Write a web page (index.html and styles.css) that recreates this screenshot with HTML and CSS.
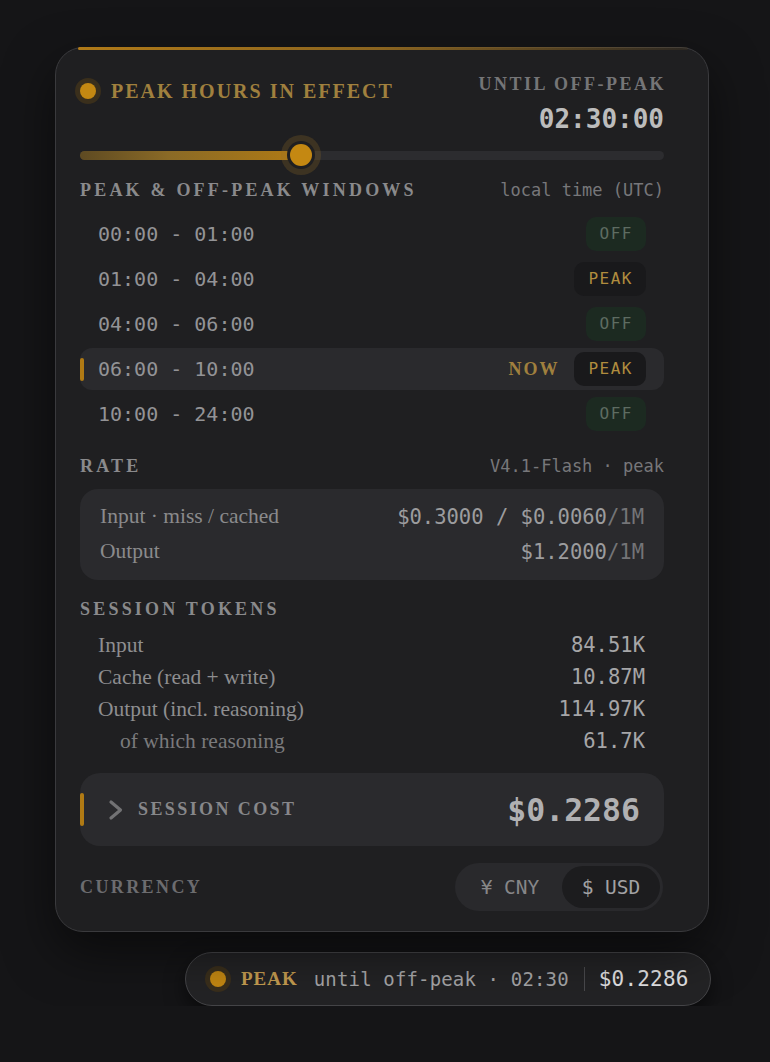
FILE: index.html
```html
<!DOCTYPE html>
<html lang="en">

<head>
  <meta charset="UTF-8">
  <meta name="viewport" content="width=device-width, initial-scale=1.0">
  <title>Peak hours</title>
  <link rel="stylesheet" href="styles.css">
</head>

<body>
  <div class="page">
    <section class="card">
      <!-- status header -->
      <header class="head">
        <div class="head-left">
          <span class="dot"></span>
          <h1 class="title">PEAK HOURS IN EFFECT</h1>
        </div>
        <div class="head-right">
          <div class="until">UNTIL OFF-PEAK</div>
          <div class="timer">02:30:00</div>
        </div>
      </header>

      <div class="track">
        <div class="fill" style="width: 37.8%">
          <span class="knob"></span>
        </div>
      </div>

      <div class="section-head windows-head">
        <h2>PEAK &amp; OFF-PEAK WINDOWS</h2>
        <span class="meta">local time (UTC)</span>
      </div>

      <ul class="windows">
        <li class="win">
          <span class="time">00:00 - 01:00</span>
          <span class="badge off">OFF</span>
        </li>
        <li class="win">
          <span class="time">01:00 - 04:00</span>
          <span class="badge peak">PEAK</span>
        </li>
        <li class="win">
          <span class="time">04:00 - 06:00</span>
          <span class="badge off">OFF</span>
        </li>
        <li class="win current">
          <span class="time">06:00 - 10:00</span>
          <span class="now">NOW</span>
          <span class="badge peak">PEAK</span>
        </li>
        <li class="win">
          <span class="time">10:00 - 24:00</span>
          <span class="badge off">OFF</span>
        </li>
      </ul>

      <div class="section-head rate-head">
        <h2>RATE</h2>
        <span class="meta">V4.1-Flash · peak</span>
      </div>

      <div class="rate-box">
        <div class="rate-row">
          <span class="label">Input · miss / cached</span>
          <span class="value">$0.3000 / $0.0060<span class="unit">/1M</span></span>
        </div>
        <div class="rate-row">
          <span class="label">Output</span>
          <span class="value">$1.2000<span class="unit">/1M</span></span>
        </div>
      </div>

      <div class="section-head tokens-head">
        <h2>SESSION TOKENS</h2>
      </div>

      <div class="tokens">
        <div class="tok-row">
          <span class="label">Input</span>
          <span class="value">84.51K</span>
        </div>
        <div class="tok-row">
          <span class="label">Cache (read + write)</span>
          <span class="value">10.87M</span>
        </div>
        <div class="tok-row">
          <span class="label">Output (incl. reasoning)</span>
          <span class="value">114.97K</span>
        </div>
        <div class="tok-row sub">
          <span class="label">of which reasoning</span>
          <span class="value">61.7K</span>
        </div>
      </div>

      <div class="cost-box">
        <span class="cost-bar"></span>
        <svg class="chev" width="16" height="22" viewBox="0 0 16 22">
          <path d="M3 3 L12.5 11 L3 19" fill="none" stroke="#727274" stroke-width="3.2" stroke-linecap="round" stroke-linejoin="round" />
        </svg>
        <span class="cost-label">SESSION COST</span>
        <span class="cost-value">$0.2286</span>
      </div>

      <div class="currency">
        <span class="cur-label">CURRENCY</span>
        <div class="toggle">
          <span class="opt">¥ CNY</span>
          <span class="opt active">$ USD</span>
        </div>
      </div>
    </section>

    <!-- compact status pill -->
    <div class="pill">
      <span class="dot small"></span>
      <span class="pill-peak">PEAK</span>
      <span class="pill-text">until off-peak · 02:30</span>
      <span class="pill-sep"></span>
      <span class="pill-cost">$0.2286</span>
    </div>
  </div>
</body>

</html>
```

FILE: styles.css
```css
body {
  margin: 0;
  background: #151517;
  font-family: "Liberation Serif", serif;
  color: #8a8a8a;
}

.page {
  padding: 47px 0 0 55px;
}

.card {
  position: relative;
  width: 654px;
  box-sizing: border-box;
  padding: 25px 44px 20px 24px;
  background: #1f1f21;
  border: 1px solid #3a3a3d;
  border-radius: 28px;
  box-shadow: 0 20px 50px rgba(0, 0, 0, 0.5);
}

/* gold edge along the top */
.card::before {
  content: "";
  position: absolute;
  top: -1px;
  left: 22px;
  right: 20px;
  height: 3px;
  border-radius: 2px;
  background: linear-gradient(to right, #b07a18, #8a6420 50%, rgba(120, 90, 40, 0.15));
}

h1,
h2 {
  margin: 0;
  font-weight: bold;
}

/* header */
.head {
  display: flex;
  justify-content: space-between;
  align-items: flex-start;
}

.head-left {
  display: flex;
  align-items: center;
  gap: 15px;
  margin-top: 5px;
}

.dot {
  width: 16px;
  height: 16px;
  border-radius: 50%;
  background: #c48812;
  box-shadow: 0 0 0 5px #3a2f1c;
}

.title {
  font-size: 20px;
  line-height: 26px;
  letter-spacing: 2px;
  color: #a0803e;
}

.head-right {
  text-align: right;
}

.until {
  font-size: 18px;
  line-height: 22px;
  letter-spacing: 2.5px;
  font-weight: bold;
  color: #757577;
  margin-right: -2px;
}

.timer {
  margin-top: 9px;
  font-family: "DejaVu Sans Mono", monospace;
  font-weight: bold;
  font-size: 26px;
  line-height: 30px;
  color: #bcbcbc;
}

/* progress */
.track {
  margin-top: 17px;
  height: 9px;
  border-radius: 5px;
  background: #2c2c2f;
}

.fill {
  position: relative;
  height: 100%;
  border-radius: 5px;
  background: linear-gradient(to right, #5e4a22, #8a6a26 40%, #b07a14);
}

.knob {
  position: absolute;
  right: -11px;
  top: -7px;
  width: 22px;
  height: 22px;
  border-radius: 50%;
  background: #c48812;
  box-shadow: 0 0 0 3px #1f1f21, 0 0 0 9px rgba(150, 110, 40, 0.25);
}

/* section headings */
.section-head {
  display: flex;
  justify-content: space-between;
  align-items: center;
  height: 22px;
}

.section-head h2 {
  font-size: 18px;
  letter-spacing: 3.2px;
  color: #8a8a8c;
}

.meta {
  font-family: "DejaVu Sans Mono", monospace;
  font-size: 17px;
  color: #77777a;
}

.windows-head {
  margin-top: 19px;
}

/* time windows */
.windows {
  list-style: none;
  margin: 12px 0 0;
  padding: 0;
  display: flex;
  flex-direction: column;
  gap: 3px;
}

.win {
  position: relative;
  display: flex;
  align-items: center;
  height: 42px;
  padding: 0 18px;
  border-radius: 12px;
}

.win .time {
  flex: 1;
  font-family: "DejaVu Sans Mono", monospace;
  font-size: 20px;
  color: #939396;
}

.win.current {
  background: #2a2a2d;
}

.win.current::before {
  content: "";
  position: absolute;
  left: 0;
  top: 10px;
  width: 4px;
  height: 23px;
  border-radius: 2px;
  background: #b07a14;
}

.now {
  margin-right: 15px;
  font-size: 18px;
  font-weight: bold;
  letter-spacing: 2px;
  color: #a0803e;
}

.badge {
  height: 34px;
  line-height: 34px;
  padding: 0 13px 0 14px;
  border-radius: 10px;
  font-family: "DejaVu Sans Mono", monospace;
  font-size: 16px;
  letter-spacing: 1.5px;
}

.badge.off {
  background: #1c2a21;
  color: #5e6c62;
}

.badge.peak {
  background: #19191b;
  color: #b08c3e;
}

/* rate */
.rate-head {
  margin-top: 20px;
}

.rate-box {
  margin-top: 12px;
  padding: 10px 20px 11px;
  border-radius: 18px;
  background: #2a2a2d;
}

.rate-row,
.tok-row {
  display: flex;
  justify-content: space-between;
  align-items: center;
}

.rate-row {
  height: 35px;
}

.label {
  font-size: 21.5px;
  color: #8a8a8c;
}

.value {
  font-family: "DejaVu Sans Mono", monospace;
  font-size: 20.5px;
  color: #9c9c9e;
}

.unit {
  color: #747477;
}

/* tokens */
.tokens-head {
  margin-top: 18px;
}

.tokens {
  margin-top: 9px;
  padding: 0 19px 0 18px;
}

.tok-row {
  height: 32px;
}

.tok-row .label {
  color: #8e8e90;
}

.tok-row .value {
  color: #a6a6a8;
}

.tok-row.sub .label {
  padding-left: 22px;
  color: #7a7a7c;
}

/* session cost */
.cost-box {
  position: relative;
  display: flex;
  align-items: center;
  height: 73px;
  margin-top: 16px;
  padding: 0 24px 0 28px;
  border-radius: 20px;
  background: #2a2a2d;
}

.cost-bar {
  position: absolute;
  left: 0;
  top: 20px;
  width: 4px;
  height: 33px;
  border-radius: 2px;
  background: #b07a14;
}

.chev {
  margin-right: 14px;
}

.cost-label {
  flex: 1;
  font-size: 18px;
  font-weight: bold;
  letter-spacing: 2.4px;
  color: #87878a;
}

.cost-value {
  font-family: "DejaVu Sans Mono", monospace;
  font-weight: bold;
  font-size: 31.5px;
  color: #b0b0b2;
}

/* currency */
.currency {
  display: flex;
  justify-content: space-between;
  align-items: center;
  margin-top: 17px;
}

.cur-label {
  font-size: 18px;
  font-weight: bold;
  letter-spacing: 2.4px;
  color: #6c6c6f;
}

.toggle {
  display: flex;
  width: 208px;
  height: 48px;
  box-sizing: border-box;
  padding: 3px;
  border-radius: 24px;
  background: #29292c;
  margin-right: 1px;
}

.opt {
  flex: 1;
  display: flex;
  align-items: center;
  justify-content: center;
  border-radius: 21px;
  font-family: "DejaVu Sans Mono", monospace;
  font-size: 19.5px;
  color: #868688;
}

.opt.active {
  flex: 0 0 98px;
  background: #1c1c1e;
  color: #a2a2a4;
}

/* pill */
.pill {
  display: flex;
  align-items: center;
  width: 526px;
  height: 54px;
  box-sizing: border-box;
  margin: 20px 0 0 130px;
  padding: 0 25px 0 19px;
  border: 1px solid #454548;
  border-radius: 27px;
  background: #232325;
  box-shadow: 0 8px 20px rgba(0, 0, 0, 0.5);
  white-space: nowrap;
}

.dot.small {
  margin: 0 0 0 5px;
  flex: none;
}

.pill-peak {
  margin-left: 15px;
  font-size: 19px;
  font-weight: bold;
  letter-spacing: 1px;
  color: #c49c50;
}

.pill-text {
  margin-left: 16px;
  font-family: "DejaVu Sans Mono", monospace;
  font-size: 19px;
  letter-spacing: 0.15px;
  color: #a6a6a8;
}

.pill-sep {
  flex: none;
  width: 1px;
  height: 24px;
  margin: 0 14px 0 15px;
  background: #4a4a4d;
}

.pill-cost {
  font-family: "DejaVu Sans Mono", monospace;
  font-size: 21px;
  letter-spacing: 0.2px;
  color: #e2e2e4;
}
```
